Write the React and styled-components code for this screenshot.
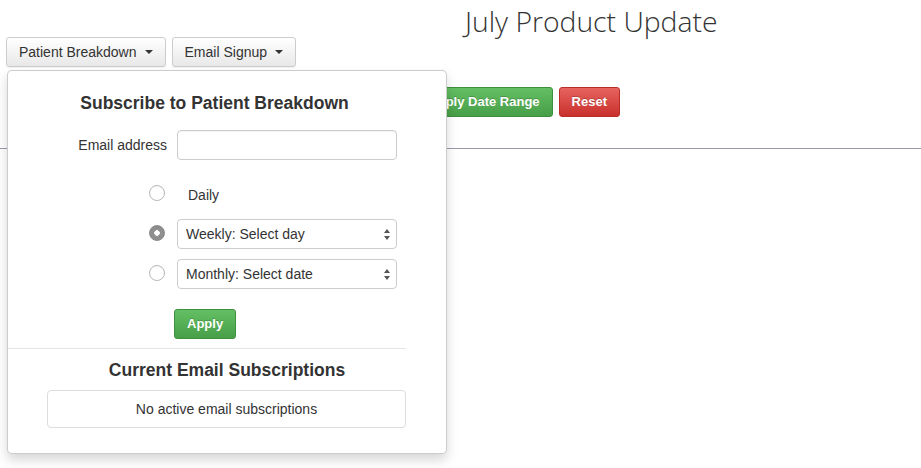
import React from "react";
import styled, { createGlobalStyle } from "styled-components";

const GlobalStyle = createGlobalStyle`
  body {
    margin: 0;
    background: #fff;
    font-family: "Liberation Sans", Arial, sans-serif;
    font-size: 14px;
    color: #333;
  }
`;

const Page = styled.div`
  position: relative;
  width: 921px;
  height: 468px;
  overflow: hidden;
`;

const Header = styled.header`
  padding: 5px 0 0 465px;
  height: 32px;
`;

const Title = styled.h1`
  margin: 0;
  font-family: "Open Sans", sans-serif;
  font-weight: 300;
  font-size: 28.3px;
  line-height: 32px;
  color: #333;
`;

const Toolbar = styled.div`
  display: flex;
  gap: 6px;
  padding-left: 6px;
`;

const DropButton = styled.button`
  display: flex;
  align-items: center;
  gap: 8px;
  height: 30px;
  padding: 5px 12px;
  border: 1px solid #ccc;
  border-radius: 3px;
  background: linear-gradient(#fff, #e8e8e8);
  font-family: inherit;
  font-size: 14px;
  line-height: 18px;
  color: #333;
  box-shadow: 0 1px 1px rgba(0, 0, 0, 0.05);
`;

const Caret = styled.span`
  width: 0;
  height: 0;
  border-top: 4px solid #333;
  border-left: 4px solid transparent;
  border-right: 4px solid transparent;
`;

const RangeRow = styled.div`
  display: flex;
  justify-content: flex-end;
  gap: 6px;
  width: 620px;
  margin-top: 20px;
`;

const ColorButton = styled.button`
  height: 30px;
  padding: 5px 12px;
  border: 1px solid ${(p) => (p.$danger ? "#b92c28" : "#3e8f3e")};
  border-radius: 3px;
  background: ${(p) =>
    p.$danger
      ? "linear-gradient(#e7645f, #c9302c)"
      : "linear-gradient(#64bf64, #479f47)"};
  color: #fff;
  font-family: inherit;
  font-size: 13px;
  font-weight: bold;
  line-height: 18px;
  text-shadow: 0 -1px 0 rgba(0, 0, 0, 0.2);
`;

const Rule = styled.hr`
  margin: 31px 0 0;
  border: 0;
  border-top: 1px solid #9b9ba8;
`;

const Panel = styled.div`
  position: absolute;
  left: 7px;
  top: 70px;
  width: 440px;
  box-sizing: border-box;
  padding: 22px 0 25px;
  background: #fff;
  border: 1px solid rgba(0, 0, 0, 0.2);
  border-radius: 5px;
  box-shadow: 0 6px 12px rgba(0, 0, 0, 0.16);
`;

const PanelTitle = styled.h3`
  margin: 0;
  padding-right: ${(p) => p.$shift || 0}px;
  text-align: center;
  font-size: 17.5px;
  line-height: 20px;
  font-weight: bold;
  color: #333;
`;

const Form = styled.div`
  display: flex;
  flex-direction: column;
  margin-top: 17px;
`;

const Row = styled.div`
  display: flex;
  align-items: center;
  gap: 10px;
  height: 30px;
  margin-top: ${(p) => p.$top || 0}px;
`;

const Lead = styled.div`
  width: 159px;
  display: flex;
  justify-content: flex-end;
  padding-right: ${(p) => p.$pad || 0}px;
  box-sizing: border-box;
`;

const Control = styled.div`
  position: relative;
  width: 220px;
  height: 30px;
  display: flex;
  align-items: center;
`;

const Label = styled.label`
  font-size: 14px;
`;

const TextInput = styled.input`
  width: 100%;
  box-sizing: border-box;
  height: 30px;
  border: 1px solid #ccc;
  border-radius: 4px;
  padding: 4px 9px;
  font-family: inherit;
  font-size: 14px;
  box-shadow: inset 0 1px 1px rgba(0, 0, 0, 0.05);
`;

const Radio = styled.input.attrs({ type: "radio" })`
  appearance: none;
  margin: 0 0 3px;
  width: 16px;
  height: 16px;
  border-radius: 50%;
  border: 1px solid #b8b8b8;
  background: #fff;
  box-shadow: inset 0 1px 1px rgba(0, 0, 0, 0.04);
  &:checked {
    border-color: #8b8b8b;
    background: radial-gradient(circle, #fff 0 2.5px, #8f8f8f 3px);
  }
`;

const Daily = styled.span`
  padding: 2px 0 0 11px;
  font-size: 14px;
`;

const Select = styled.select`
  appearance: none;
  width: 100%;
  height: 30px;
  box-sizing: border-box;
  border: 1px solid #ccc;
  border-radius: 4px;
  background: #fff;
  padding: 0 8px;
  font-family: inherit;
  font-size: 14px;
  color: #333;
`;

const Arrows = styled.svg`
  position: absolute;
  right: 7px;
  top: 10px;
  pointer-events: none;
`;

const ApplyCell = styled.div`
  width: 220px;
  margin-left: -3px;
`;

const Divider = styled.hr`
  margin: 9px 40px 0 0;
  border: 0;
  border-top: 1px solid #e5e5e5;
`;

const Subs = styled.div`
  margin-top: 11px;
`;

const EmptyBox = styled.div`
  margin: 10px 40px 0 39px;
  height: 38px;
  box-sizing: border-box;
  border: 1px solid #ddd;
  border-radius: 4px;
  display: flex;
  align-items: center;
  justify-content: center;
  font-size: 14px;
`;

const SelectField = ({ label }) => (
  <Control>
    <Select defaultValue="">
      <option value="">{label}</option>
    </Select>
    <Arrows width="6" height="11" viewBox="0 0 6 11">
      <path d="M3 0 L6 4 L0 4 Z M0 7 L6 7 L3 11 Z" fill="#555" />
    </Arrows>
  </Control>
);

export default function App() {
  return (
    <Page>
      <GlobalStyle />
      <Header>
        <Title>July Product Update</Title>
      </Header>
      <Toolbar>
        <DropButton>
          Patient Breakdown <Caret />
        </DropButton>
        <DropButton>
          Email Signup <Caret />
        </DropButton>
      </Toolbar>
      <RangeRow>
        <ColorButton>Apply Date Range</ColorButton>
        <ColorButton $danger>Reset</ColorButton>
      </RangeRow>
      <Rule />

      <Panel>
        <PanelTitle $shift={25}>Subscribe to Patient Breakdown</PanelTitle>
        <Form>
          <Row>
            <Lead>
              <Label>Email address</Label>
            </Lead>
            <Control>
              <TextInput type="text" />
            </Control>
          </Row>

          <Row $top={19}>
            <Lead $pad={2}>
              <Radio name="freq" />
            </Lead>
            <Control>
              <Daily>Daily</Daily>
            </Control>
          </Row>

          <Row $top={10}>
            <Lead $pad={2}>
              <Radio name="freq" defaultChecked />
            </Lead>
            <SelectField label="Weekly: Select day" />
          </Row>

          <Row $top={10}>
            <Lead $pad={2}>
              <Radio name="freq" />
            </Lead>
            <SelectField label="Monthly: Select date" />
          </Row>

          <Row $top={20}>
            <Lead />
            <ApplyCell>
              <ColorButton>Apply</ColorButton>
            </ApplyCell>
          </Row>
        </Form>
        <Divider />
        <Subs>
          <PanelTitle>Current Email Subscriptions</PanelTitle>
          <EmptyBox>No active email subscriptions</EmptyBox>
        </Subs>
      </Panel>
    </Page>
  );
}
